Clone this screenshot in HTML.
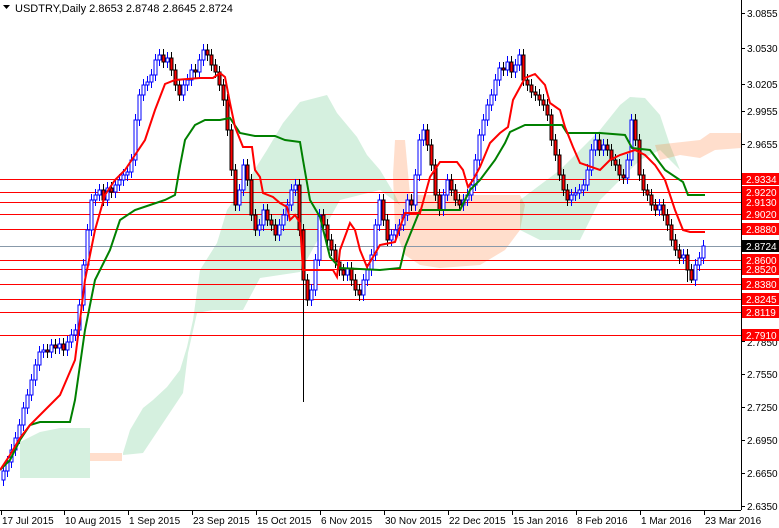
<!DOCTYPE html>
<html><head><meta charset="utf-8"><style>
html,body{margin:0;padding:0;background:#fff;width:779px;height:528px;overflow:hidden}
svg{display:block;font-family:"Liberation Sans",sans-serif}
</style></head><body>
<svg width="779" height="528" viewBox="0 0 779 528" xmlns="http://www.w3.org/2000/svg">
<g fill-opacity="0.2">
<polygon fill="#2db55d" points="20,442 40,432 60,428 90,428 90,478 20,478"/>
<polygon fill="#ff5a00" points="90,453 122,453 122,461 90,461"/>
<polygon fill="#2db55d" points="123,453 130,430 143,408 153,400 167,387 180,370 187,347 193,320 200,270 217,243 227,210 250,177 267,150 283,123 300,102 327,95 337,113 357,137 367,155 380,170 395,195 400,205 380,190 340,200 300,272 260,278 243,310 213,310 197,313 188,353 183,393 167,417 143,453 123,455"/>
<polygon fill="#ff5a00" points="395,140 405,140 410,195 440,195 480,195 520,195 525,205 520,230 505,250 480,265 440,268 420,265 405,255 395,230 393,175"/>
<polygon fill="#2db55d" points="520,200 540,185 560,170 580,150 600,130 620,105 630,97 645,98 660,115 670,145 680,170 660,150 640,160 620,180 600,200 590,220 580,240 560,240 540,240 520,230"/>
<polygon fill="#ff5a00" points="655,145 700,140 710,133 741,133 741,148 715,150 700,158 680,155 660,160"/>
</g>
<line x1="0" y1="246.5" x2="741" y2="246.5" stroke="#8899aa"/>
<g stroke="#ff0000">
<line x1="0" x2="741" y1="179.5" y2="179.5"/><line x1="0" x2="741" y1="192.5" y2="192.5"/><line x1="0" x2="741" y1="202.5" y2="202.5"/><line x1="0" x2="741" y1="214.5" y2="214.5"/><line x1="0" x2="741" y1="229.5" y2="229.5"/><line x1="0" x2="741" y1="260.5" y2="260.5"/><line x1="0" x2="741" y1="269.5" y2="269.5"/><line x1="0" x2="741" y1="284.5" y2="284.5"/><line x1="0" x2="741" y1="299.5" y2="299.5"/><line x1="0" x2="741" y1="312.5" y2="312.5"/><line x1="0" x2="741" y1="335.5" y2="335.5"/>
</g>
<path fill="none" stroke="#0000ff" d="M3.5 465V486 M7.5 456V477 M11.5 444V468 M15.5 432V456 M19.5 419V444 M23.5 402V431 M27.5 389V414 M31.5 374V401 M35.5 359V386 M39.5 346V371 M43.5 344V358 M51.5 339V358 M59.5 338V354 M67.5 336V356 M71.5 329V348 M75.5 324V341 M79.5 299V336 M83.5 259V311 M87.5 224V271 M91.5 194V236 M95.5 189V206 M99.5 184V201 M107.5 182V206 M115.5 179V198 M119.5 174V191 M123.5 169V186 M127.5 166V181 M131.5 154V178 M135.5 114V166 M139.5 89V126 M143.5 79V101 M147.5 76V91 M151.5 69V88 M155.5 54V81 M159.5 49V66 M167.5 52V68 M183.5 79V101 M187.5 74V91 M191.5 64V86 M199.5 54V78 M203.5 44V66 M239.5 184V211 M243.5 159V196 M259.5 219V236 M263.5 204V231 M279.5 219V241 M283.5 209V231 M287.5 199V221 M291.5 184V211 M295.5 179V196 M311.5 284V306 M315.5 254V296 M319.5 209V266 M347.5 262V281 M363.5 274V301 M367.5 264V286 M371.5 249V276 M375.5 219V261 M379.5 194V231 M391.5 229V246 M395.5 224V241 M399.5 219V236 M403.5 209V231 M407.5 194V221 M415.5 169V211 M419.5 134V181 M423.5 124V146 M443.5 189V216 M447.5 174V201 M463.5 194V211 M467.5 189V206 M471.5 179V201 M475.5 154V191 M479.5 129V166 M483.5 114V141 M487.5 99V126 M491.5 89V111 M495.5 74V101 M499.5 62V86 M507.5 56V76 M515.5 59V78 M519.5 49V71 M571.5 189V206 M575.5 187V201 M579.5 184V199 M583.5 179V196 M587.5 164V191 M591.5 144V176 M595.5 134V156 M603.5 139V156 M627.5 154V184 M631.5 114V166 M659.5 199V216 M683.5 249V264 M695.5 259V286 M699.5 252V271 M703.5 240V264"/>
<path fill="none" stroke="#000" d="M47.5 344V358 M55.5 339V354 M63.5 338V356 M103.5 184V206 M111.5 182V198 M163.5 49V68 M171.5 52V76 M175.5 64V91 M179.5 79V101 M195.5 64V78 M207.5 44V61 M211.5 49V71 M215.5 59V78 M219.5 66V91 M223.5 79V106 M227.5 94V136 M231.5 124V176 M235.5 164V211 M247.5 159V186 M251.5 174V221 M255.5 209V236 M267.5 204V226 M271.5 214V231 M275.5 219V241 M299.5 179V236 M303.5 224V402 M307.5 274V306 M323.5 209V231 M327.5 219V246 M331.5 234V256 M335.5 244V268 M339.5 256V276 M343.5 264V281 M351.5 262V286 M355.5 274V296 M359.5 284V301 M383.5 194V226 M387.5 214V246 M411.5 194V211 M427.5 124V151 M431.5 139V171 M435.5 159V201 M439.5 189V216 M451.5 174V196 M455.5 184V206 M459.5 194V211 M503.5 62V76 M511.5 56V78 M523.5 49V86 M527.5 74V91 M531.5 79V98 M535.5 86V101 M539.5 89V106 M543.5 94V111 M547.5 99V121 M551.5 109V146 M555.5 134V161 M559.5 149V181 M563.5 169V196 M567.5 184V206 M599.5 134V156 M607.5 139V156 M611.5 144V166 M615.5 154V171 M619.5 159V181 M623.5 169V184 M635.5 114V146 M639.5 134V181 M643.5 169V196 M647.5 184V201 M651.5 189V211 M655.5 199V216 M663.5 199V221 M667.5 209V231 M671.5 219V246 M675.5 234V256 M679.5 244V264 M687.5 249V282 M691.5 264V283"/>
<path fill="#fff" stroke="#0000ff" d="M2 471h3V480h-3Z M6 462h3V471h-3Z M10 450h3V462h-3Z M14 438h3V450h-3Z M18 425h3V438h-3Z M22 408h3V425h-3Z M26 395h3V408h-3Z M30 380h3V395h-3Z M34 365h3V380h-3Z M38 352h3V365h-3Z M42 350h3V352h-3Z M50 345h3V352h-3Z M58 344h3V348h-3Z M66 342h3V350h-3Z M70 335h3V342h-3Z M74 330h3V335h-3Z M78 305h3V330h-3Z M82 265h3V305h-3Z M86 230h3V265h-3Z M90 200h3V230h-3Z M94 195h3V200h-3Z M98 190h3V195h-3Z M106 188h3V200h-3Z M114 185h3V192h-3Z M118 180h3V185h-3Z M122 175h3V180h-3Z M126 172h3V175h-3Z M130 160h3V172h-3Z M134 120h3V160h-3Z M138 95h3V120h-3Z M142 85h3V95h-3Z M146 82h3V85h-3Z M150 75h3V82h-3Z M154 60h3V75h-3Z M158 55h3V60h-3Z M166 58h3V62h-3Z M182 85h3V95h-3Z M186 80h3V85h-3Z M190 70h3V80h-3Z M198 60h3V72h-3Z M202 50h3V60h-3Z M238 190h3V205h-3Z M242 165h3V190h-3Z M258 225h3V230h-3Z M262 210h3V225h-3Z M278 225h3V235h-3Z M282 215h3V225h-3Z M286 205h3V215h-3Z M290 190h3V205h-3Z M294 185h3V190h-3Z M310 290h3V300h-3Z M314 260h3V290h-3Z M318 215h3V260h-3Z M346 268h3V275h-3Z M362 280h3V295h-3Z M366 270h3V280h-3Z M370 255h3V270h-3Z M374 225h3V255h-3Z M378 200h3V225h-3Z M390 235h3V240h-3Z M394 230h3V235h-3Z M398 225h3V230h-3Z M402 215h3V225h-3Z M406 200h3V215h-3Z M414 175h3V205h-3Z M418 140h3V175h-3Z M422 130h3V140h-3Z M442 195h3V210h-3Z M446 180h3V195h-3Z M462 200h3V205h-3Z M466 195h3V200h-3Z M470 185h3V195h-3Z M474 160h3V185h-3Z M478 135h3V160h-3Z M482 120h3V135h-3Z M486 105h3V120h-3Z M490 95h3V105h-3Z M494 80h3V95h-3Z M498 68h3V80h-3Z M506 62h3V70h-3Z M514 65h3V72h-3Z M518 55h3V65h-3Z M570 195h3V200h-3Z M574 193h3V195h-3Z M578 190h3V193h-3Z M582 185h3V190h-3Z M586 170h3V185h-3Z M590 150h3V170h-3Z M594 140h3V150h-3Z M602 145h3V150h-3Z M626 160h3V178h-3Z M630 120h3V160h-3Z M658 205h3V210h-3Z M682 255h3V258h-3Z M694 265h3V280h-3Z M698 258h3V265h-3Z M702 246h3V258h-3Z"/>
<path fill="#ff0000" stroke="#000" d="M46 350h3V352h-3Z M54 345h3V348h-3Z M62 344h3V350h-3Z M102 190h3V200h-3Z M110 188h3V192h-3Z M162 55h3V62h-3Z M170 58h3V70h-3Z M174 70h3V85h-3Z M178 85h3V95h-3Z M194 70h3V72h-3Z M206 50h3V55h-3Z M210 55h3V65h-3Z M214 65h3V72h-3Z M218 72h3V85h-3Z M222 85h3V100h-3Z M226 100h3V130h-3Z M230 130h3V170h-3Z M234 170h3V205h-3Z M246 165h3V180h-3Z M250 180h3V215h-3Z M254 215h3V230h-3Z M266 210h3V220h-3Z M270 220h3V225h-3Z M274 225h3V235h-3Z M298 185h3V230h-3Z M302 230h3V280h-3Z M306 280h3V300h-3Z M322 215h3V225h-3Z M326 225h3V240h-3Z M330 240h3V250h-3Z M334 250h3V262h-3Z M338 262h3V270h-3Z M342 270h3V275h-3Z M350 268h3V280h-3Z M354 280h3V290h-3Z M358 290h3V295h-3Z M382 200h3V220h-3Z M386 220h3V240h-3Z M410 200h3V205h-3Z M426 130h3V145h-3Z M430 145h3V165h-3Z M434 165h3V195h-3Z M438 195h3V210h-3Z M450 180h3V190h-3Z M454 190h3V200h-3Z M458 200h3V205h-3Z M502 68h3V70h-3Z M510 62h3V72h-3Z M522 55h3V80h-3Z M526 80h3V85h-3Z M530 85h3V92h-3Z M534 92h3V95h-3Z M538 95h3V100h-3Z M542 100h3V105h-3Z M546 105h3V115h-3Z M550 115h3V140h-3Z M554 140h3V155h-3Z M558 155h3V175h-3Z M562 175h3V190h-3Z M566 190h3V200h-3Z M598 140h3V150h-3Z M606 145h3V150h-3Z M610 150h3V160h-3Z M614 160h3V165h-3Z M618 165h3V175h-3Z M622 175h3V178h-3Z M634 120h3V140h-3Z M638 140h3V175h-3Z M642 175h3V190h-3Z M646 190h3V195h-3Z M650 195h3V205h-3Z M654 205h3V210h-3Z M662 205h3V215h-3Z M666 215h3V225h-3Z M670 225h3V240h-3Z M674 240h3V250h-3Z M678 250h3V258h-3Z M686 255h3V270h-3Z M690 270h3V280h-3Z"/>
<polyline fill="none" stroke="#008000" stroke-width="2" points="0,470 10,460 20,440 30,425 40,422 70,422 75,400 85,330 95,280 110,250 120,220 135,210 150,205 165,200 175,195 180,166 185,140 195,125 205,120 220,120 230,118 240,133 255,136 275,136 285,140 300,142 303,160 310,200 320,217 330,257 340,268 380,270 400,268 405,247 420,210 460,210 470,190 480,180 495,160 505,143 510,132 525,125 562,125 567,133 600,133 625,135 632,148 650,150 665,170 683,182 688,195 705,195"/>
<polyline fill="none" stroke="#ff0000" stroke-width="2" points="0,470 10,455 20,438 30,425 45,410 60,395 75,360 85,280 95,230 105,195 115,180 125,170 135,155 145,140 155,110 165,84 175,80 200,78 213,78 220,73 225,77 230,103 235,127 243,147 252,147 255,170 260,177 263,193 273,197 280,203 287,207 290,220 295,215 300,223 303,270 333,270 337,277 340,250 350,223 355,230 360,250 367,267 373,257 380,245 395,242 405,213 420,213 430,177 440,162 457,162 463,170 468,187 473,180 480,167 490,143 500,133 508,127 513,100 525,78 535,74 545,85 550,103 560,110 565,127 573,147 580,163 600,170 610,160 620,155 635,150 645,155 655,165 665,180 675,210 683,230 690,232 705,232"/>
<rect x="742" y="0" width="37" height="528" fill="#fff"/>
<line x1="741.5" y1="0" x2="741.5" y2="510" stroke="#000"/>
<line x1="0" y1="510.5" x2="741" y2="510.5" stroke="#000"/>
<g font-size="10" fill="#000">
<path stroke="#000" d="M741 13.5h4M741 48.5h4M741 84.5h4M741 111.5h4M741 144.5h4M741 341.5h4M741 374.5h4M741 407.5h4M741 440.5h4M741 473.5h4M741 506.5h4"/>
<text x="747" y="17">3.0855</text><text x="747" y="52">3.0530</text><text x="747" y="88">3.0205</text><text x="747" y="115">2.9955</text><text x="747" y="148">2.9655</text><text x="747" y="346">2.7850</text><text x="747" y="378">2.7550</text><text x="747" y="411">2.7250</text><text x="747" y="444">2.6950</text><text x="747" y="477">2.6650</text><text x="747" y="510">2.6350</text>
</g>
<g font-size="10">
<g fill="#ff0000">
<rect x="742" y="173" width="37" height="12"/><rect x="742" y="186" width="37" height="12"/><rect x="742" y="196" width="37" height="12"/><rect x="742" y="208" width="37" height="12"/><rect x="742" y="223" width="37" height="12"/><rect x="742" y="254" width="37" height="12"/><rect x="742" y="263" width="37" height="12"/><rect x="742" y="278" width="37" height="12"/><rect x="742" y="293" width="37" height="12"/><rect x="742" y="306" width="37" height="12"/><rect x="742" y="329" width="37" height="12"/>
</g>
<rect x="742" y="240" width="37" height="12" fill="#000"/>
<g fill="#fff">
<text x="746" y="183">2.9334</text><text x="746" y="196">2.9220</text><text x="746" y="206">2.9130</text><text x="746" y="218">2.9020</text><text x="746" y="233">2.8880</text><text x="746" y="250">2.8724</text><text x="746" y="264">2.8600</text><text x="746" y="273">2.8520</text><text x="746" y="288">2.8380</text><text x="746" y="303">2.8245</text><text x="746" y="316">2.8119</text><text x="746" y="339">2.7910</text>
</g>
</g>
<g font-size="10" fill="#000">
<path stroke="#000" d="M1.5 510v5M64.5 510v5M128.5 510v5M192.5 510v5M256.5 510v5M320.5 510v5M384.5 510v5M448.5 510v5M512.5 510v5M576.5 510v5M640.5 510v5M704.5 510v5"/>
<text x="2" y="524">17 Jul 2015</text><text x="65" y="524">10 Aug 2015</text><text x="129" y="524">1 Sep 2015</text><text x="193" y="524">23 Sep 2015</text><text x="257" y="524">15 Oct 2015</text><text x="321" y="524">6 Nov 2015</text><text x="385" y="524">30 Nov 2015</text><text x="449" y="524">22 Dec 2015</text><text x="513" y="524">15 Jan 2016</text><text x="577" y="524">8 Feb 2016</text><text x="641" y="524">1 Mar 2016</text><text x="705" y="524">23 Mar 2016</text>
</g>
<text x="15" y="12" font-size="11" fill="#000">USDTRY,Daily  2.8653 2.8748 2.8645 2.8724</text>
<polygon points="3,5 10,5 6.5,9" fill="#000"/>
</svg>
</body></html>
